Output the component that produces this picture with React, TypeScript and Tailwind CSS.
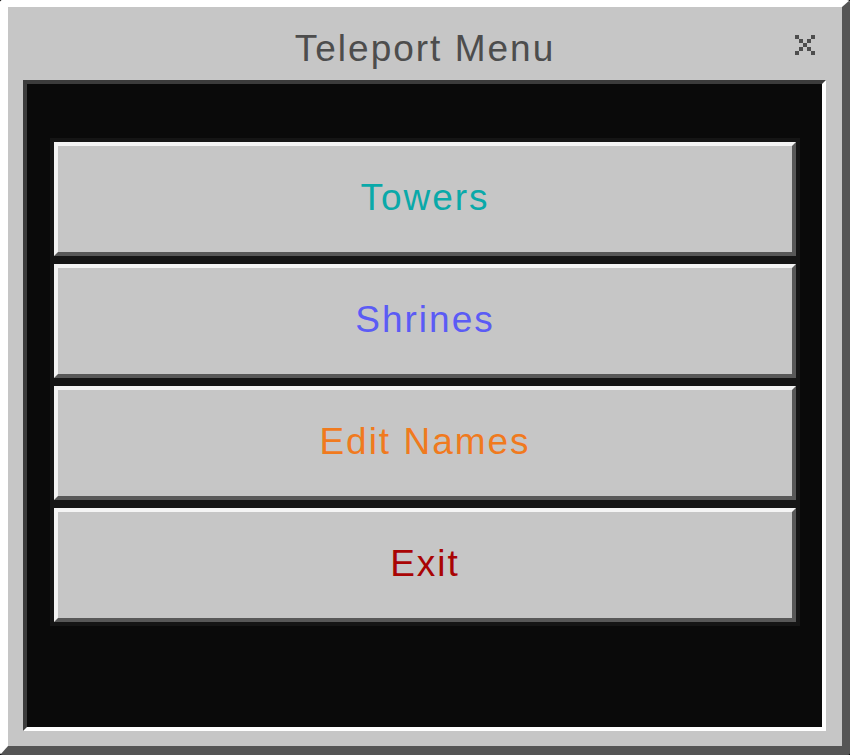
import { FC } from 'react';

const buttons = [
  { label: 'Towers', color: 'text-[#0aa9a9]' },
  { label: 'Shrines', color: 'text-[#5b5bf5]' },
  { label: 'Edit Names', color: 'text-[#f07a1e]' },
  { label: 'Exit', color: 'text-[#a90404]' },
];

const CloseIcon: FC = () => (
  <svg width="20" height="20" viewBox="0 0 5 5" shapeRendering="crispEdges" fill="#4d4d4d">
    <rect x="0" y="0" width="1" height="1" />
    <rect x="4" y="0" width="1" height="1" />
    <rect x="1" y="1" width="1" height="1" />
    <rect x="3" y="1" width="1" height="1" />
    <rect x="2" y="2" width="1" height="1" />
    <rect x="1" y="3" width="1" height="1" />
    <rect x="3" y="3" width="1" height="1" />
    <rect x="0" y="4" width="1" height="1" />
    <rect x="4" y="4" width="1" height="1" />
  </svg>
);

const App: FC = () => {
  return (
    <div className="w-[850px] h-[755px] bg-black font-['Liberation_Sans',Arial,sans-serif]">
      <div className="w-full h-full flex flex-col rounded-[3px] bg-[#c6c6c6] border-t-[7px] border-l-[8px] border-t-white border-l-white border-r-[8px] border-b-[9px] border-r-[#555555] border-b-[#555555]">
        {/* header */}
        <div className="relative h-[73px] pt-[10px] flex items-center justify-center">
          <span className="text-[37px] leading-none tracking-[2px] text-[#4d4d4d]">
            Teleport Menu
          </span>
          <button className="absolute right-[27px] top-[28px] cursor-pointer">
            <CloseIcon />
          </button>
        </div>

        {/* content */}
        <div className="flex-1 mx-[15px] mb-[15px] ml-[15px] mr-[16px] border-4 border-t-[#3c3c3c] border-l-[#3c3c3c] border-r-white border-b-white bg-[#0a0a0a]">
          <div className="flex flex-col pt-[54px] pl-[23px] pr-[22px]">
            {buttons.map((b) => (
              <div key={b.label} className="border-4 border-[#151515]">
                <button
                  className={`w-full h-[114px] flex items-center justify-center pb-1 bg-[#c6c6c6] border-4 border-t-[#f4f4f4] border-l-[#f4f4f4] border-r-[#585858] border-b-[#585858] text-[37px] leading-none tracking-[2px] cursor-pointer ${b.color}`}
                >
                  {b.label}
                </button>
              </div>
            ))}
          </div>
        </div>
      </div>
    </div>
  );
};

export default App;
